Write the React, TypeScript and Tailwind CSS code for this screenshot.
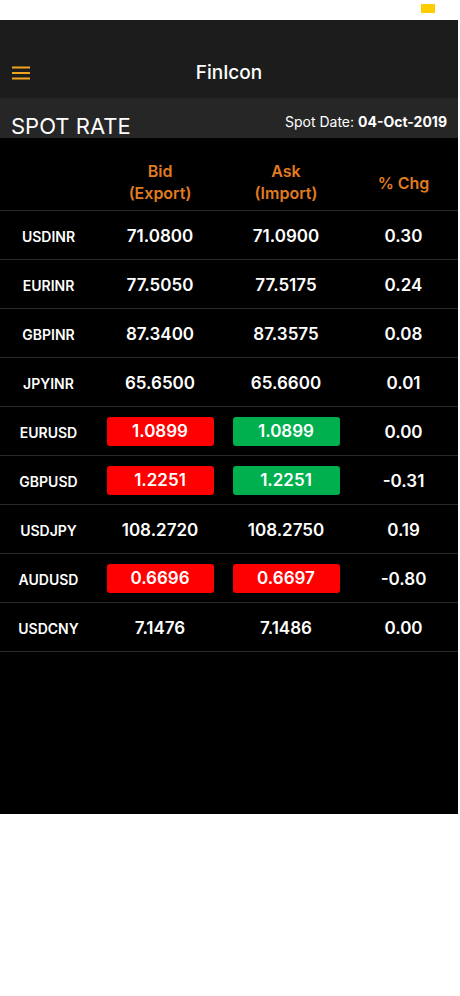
import React from 'react'

type Row = {
  pair: string
  bid: string
  ask: string
  chg: string
  bidTone?: 'up' | 'down'
  askTone?: 'up' | 'down'
}

const rows: Row[] = [
  { pair: 'USDINR', bid: '71.0800', ask: '71.0900', chg: '0.30' },
  { pair: 'EURINR', bid: '77.5050', ask: '77.5175', chg: '0.24' },
  { pair: 'GBPINR', bid: '87.3400', ask: '87.3575', chg: '0.08' },
  { pair: 'JPYINR', bid: '65.6500', ask: '65.6600', chg: '0.01' },
  { pair: 'EURUSD', bid: '1.0899', ask: '1.0899', chg: '0.00', bidTone: 'down', askTone: 'up' },
  { pair: 'GBPUSD', bid: '1.2251', ask: '1.2251', chg: '-0.31', bidTone: 'down', askTone: 'up' },
  { pair: 'USDJPY', bid: '108.2720', ask: '108.2750', chg: '0.19' },
  { pair: 'AUDUSD', bid: '0.6696', ask: '0.6697', chg: '-0.80', bidTone: 'down', askTone: 'down' },
  { pair: 'USDCNY', bid: '7.1476', ask: '7.1486', chg: '0.00' },
]

function Rate({ value, tone }: { value: string; tone?: 'up' | 'down' }) {
  if (!tone) return <span className="pt-[3px]">{value}</span>
  return (
    <span
      className={
        'flex h-[29px] w-[107px] items-center justify-center rounded-[3px] pt-[1px] ' +
        (tone === 'up' ? 'bg-[#00b04f]' : 'bg-[#ff0000]')
      }
    >
      {value}
    </span>
  )
}

export default function App() {
  return (
    <div className="min-h-[996px] bg-white font-['Inter',sans-serif]">
      {/* status strip */}
      <div className="relative h-[20px]">
        <div className="absolute left-[421px] top-[4px] h-[9px] w-[14px] bg-[#ffcc00]" />
      </div>

      <div className="w-[458px] bg-black">
        {/* nav */}
        <div className="relative flex h-[78px] items-end justify-center bg-[#1c1c1c] pb-[11px]">
          <svg className="absolute left-[12px] top-[46px]" width="18" height="14" viewBox="0 0 18 14">
            <path d="M0 1.5h18M0 7h18M0 12.5h18" stroke="#f0a31c" strokeWidth="2" />
          </svg>
          <span className="text-[19px] font-medium text-white">FinIcon</span>
        </div>

        {/* title bar */}
        <div className="flex h-[40px] items-end justify-between bg-[#262626] px-[11px]">
          <span className="text-[22px] leading-[24px] text-white">SPOT RATE</span>
          <span className="mb-[6px] text-[14px] text-white">
            Spot Date: <b className="font-bold">04-Oct-2019</b>
          </span>
        </div>

        {/* table */}
        <div className="h-[676px] text-white">
          <div className="grid h-[73px] grid-cols-[97px_126px_126px_109px] items-center border-b border-[#2a2a2a] text-center text-[16px] font-semibold leading-[22px] text-[#e07b20]">
            <span />
            <span className="pt-[16px]">
              Bid
              <br />
              (Export)
            </span>
            <span className="pt-[16px]">
              Ask
              <br />
              (Import)
            </span>
            <span className="pt-[17px]">% Chg</span>
          </div>
          {rows.map((r) => (
            <div
              key={r.pair}
              className="grid h-[49px] grid-cols-[97px_126px_126px_109px] items-center border-b border-[#2a2a2a] text-center"
            >
              <span className="pt-[3px] text-[14px] font-semibold">{r.pair}</span>
              <span className="flex justify-center text-[17px] font-semibold">
                <Rate value={r.bid} tone={r.bidTone} />
              </span>
              <span className="flex justify-center text-[17px] font-semibold">
                <Rate value={r.ask} tone={r.askTone} />
              </span>
              <span className="pt-[3px] text-[17px] font-semibold">{r.chg}</span>
            </div>
          ))}
        </div>
      </div>
    </div>
  )
}
